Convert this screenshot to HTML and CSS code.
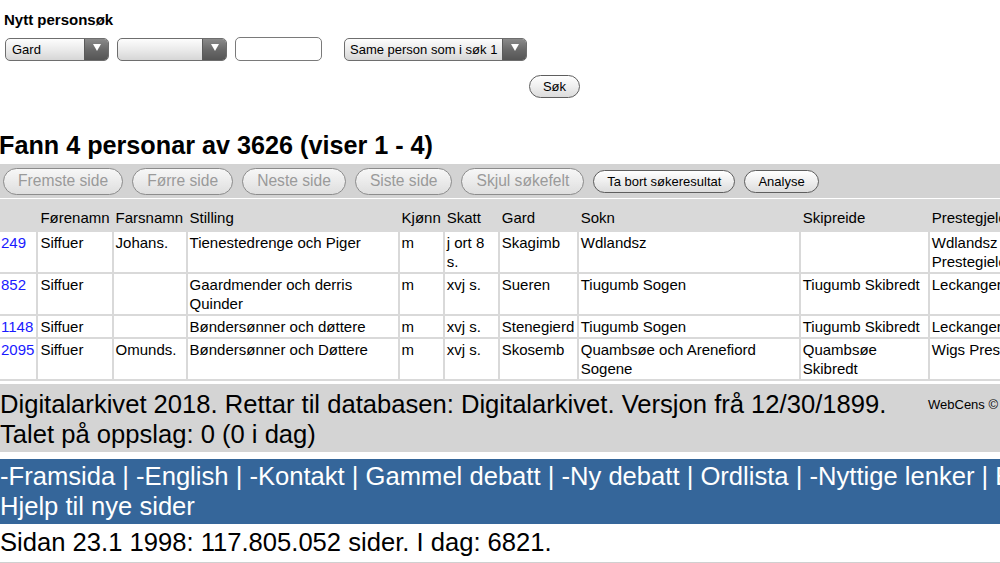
FILE: index.html
```html
<!DOCTYPE html>
<html lang="no">
<head>
<meta charset="utf-8">
<title>Personsøk</title>
<link rel="stylesheet" href="styles.css">
</head>
<body>
<div class="page">
  <section class="search">
    <h3 class="search-title">Nytt personsøk</h3>
    <div class="form-row">
      <span class="select sel-field"><select><option>Gard</option></select><span class="select-arrow"></span></span>
      <span class="select sel-op"><select><option></option></select><span class="select-arrow"></span></span>
      <input class="text-input" type="text">
      <span class="select sel-same"><select><option>Same person som i søk 1</option></select><span class="select-arrow"></span></span>
    </div>
    <div class="submit-row">
      <button class="btn btn-small" type="button">Søk</button>
    </div>
  </section>

  <h2 class="result-title">Fann 4 personar av 3626 (viser 1 - 4)</h2>

  <div class="button-bar">
    <button class="btn btn-big" type="button" disabled>Fremste side</button>
    <button class="btn btn-big" type="button" disabled>Førre side</button>
    <button class="btn btn-big" type="button" disabled>Neste side</button>
    <button class="btn btn-big" type="button" disabled>Siste side</button>
    <button class="btn btn-big" type="button" disabled>Skjul søkefelt</button>
    <button class="btn btn-small" type="button">Ta bort søkeresultat</button>
    <button class="btn btn-small" type="button">Analyse</button>
  </div>

  <table class="results">
    <thead>
      <tr>
        <th class="c-id"></th>
        <th class="c-fn">Førenamn</th>
        <th class="c-far">Farsnamn</th>
        <th class="c-st">Stilling</th>
        <th class="c-kj">Kjønn</th>
        <th class="c-sk">Skatt</th>
        <th class="c-ga">Gard</th>
        <th class="c-so">Sokn</th>
        <th class="c-skp">Skipreide</th>
        <th class="c-pr">Prestegjeld</th>
      </tr>
    </thead>
    <tbody>
      <tr>
        <td><a href="#">249</a></td>
        <td>Siffuer</td>
        <td>Johans.</td>
        <td>Tienestedrenge och Piger</td>
        <td>m</td>
        <td>j ort 8 s.</td>
        <td>Skagimb</td>
        <td>Wdlandsz</td>
        <td></td>
        <td>Wdlandsz Prestegield</td>
      </tr>
      <tr>
        <td><a href="#">852</a></td>
        <td>Siffuer</td>
        <td></td>
        <td>Gaardmender och derris Quinder</td>
        <td>m</td>
        <td>xvj s.</td>
        <td>Sueren</td>
        <td>Tiugumb Sogen</td>
        <td>Tiugumb Skibredt</td>
        <td>Leckanger</td>
      </tr>
      <tr>
        <td><a href="#">1148</a></td>
        <td>Siffuer</td>
        <td></td>
        <td>Bøndersønner och døttere</td>
        <td>m</td>
        <td>xvj s.</td>
        <td>Stenegierd</td>
        <td>Tiugumb Sogen</td>
        <td>Tiugumb Skibredt</td>
        <td>Leckanger</td>
      </tr>
      <tr>
        <td><a href="#">2095</a></td>
        <td>Siffuer</td>
        <td>Omunds.</td>
        <td>Bøndersønner och Døttere</td>
        <td>m</td>
        <td>xvj s.</td>
        <td>Skosemb</td>
        <td>Quambsøe och Arenefiord Sogene</td>
        <td>Quambsøe Skibredt</td>
        <td>Wigs Prestegield</td>
      </tr>
    </tbody>
  </table>

  <div class="footer-info">
    <div class="footer-text">Digitalarkivet 2018. Rettar til databasen: Digitalarkivet. Versjon frå 12/30/1899. Talet på oppslag: 0 (0 i dag)</div>
    <div class="footer-credit">WebCens © 2018</div>
  </div>

  <nav class="nav-bar">
    <a href="#">-Framsida</a> | <a href="#">-English</a> | <a href="#">-Kontakt</a> | <a href="#">Gammel debatt</a> | <a href="#">-Ny debatt</a> | <a href="#">Ordlista</a> | <a href="#">-Nyttige lenker</a> | <a href="#">Bidrag</a> | <a href="#">Hjelp til nye sider</a>
  </nav>

  <p class="counter">Sidan 23.1 1998: 117.805.052 sider. I dag: 6821.</p>
  <div class="bottom-rule"></div>
</div>
</body>
</html>
```

FILE: styles.css
```css
html, body {
  margin: 0;
  padding: 0;
  overflow: hidden;
  background: #ffffff;
}

body {
  font-family: "Liberation Sans", Arial, Helvetica, sans-serif;
  color: #000;
}

.page {
  width: 1100px;
}

/* ---------- search form ---------- */
.search {
  padding: 11px 0 0 5px;
}

.search-title {
  margin: 0 0 0 -1px;
  font-size: 15px;
  line-height: 17px;
  font-weight: bold;
}

.form-row {
  display: flex;
  align-items: center;
  margin-top: 9px;
  height: 24px;
}

.select {
  display: inline-flex;
  height: 23px;
  box-sizing: border-box;
  border: 1px solid #6e6e6e;
  border-radius: 5px;
  overflow: hidden;
  background: linear-gradient(#fdfdfd, #e9e9e9 55%, #d6d6d6);
}

.select select {
  appearance: none;
  -webkit-appearance: none;
  border: 0;
  background: transparent;
  font-family: "Liberation Sans", Arial, sans-serif;
  font-size: 13px;
  color: #000;
  padding: 0 0 0 6px;
  margin: 0;
  flex: 1;
  min-width: 0;
  height: 21px;
  outline: none;
}

.select-arrow {
  width: 23px;
  flex: none;
  border-left: 1px solid #5a5a5a;
  background: linear-gradient(#8a8a8a, #6a6a6a 50%, #555);
  display: flex;
  align-items: center;
  justify-content: center;
}

.select-arrow::before {
  content: "";
  width: 0;
  height: 0;
  border-left: 4px solid transparent;
  border-right: 4px solid transparent;
  border-top: 7px solid #ffffff;
  margin-top: -3px;
}

.sel-field { width: 104px; }
.sel-op { width: 110px; margin-left: 8px; }
.sel-same { width: 183px; margin-left: 22px; }
.sel-same select { padding-left: 5px; }

.text-input {
  width: 87px;
  height: 24px;
  box-sizing: border-box;
  margin: 0 0 0 8px;
  border: 1px solid #7a7a7a;
  border-radius: 5px;
  padding: 0 4px;
  background: #fff;
  font-size: 13px;
}

.submit-row {
  display: flex;
  justify-content: flex-end;
  width: 575px;
  margin-top: 14px;
}

/* ---------- buttons ---------- */
.btn {
  font-family: "Liberation Sans", Arial, sans-serif;
  border-radius: 14px;
  background: linear-gradient(#ffffff, #f0f0f0 45%, #dcdcdc);
  cursor: pointer;
  margin: 0;
  white-space: nowrap;
}

.btn-small {
  height: 23px;
  font-size: 13px;
  color: #000;
  border: 1px solid #5e5e5e;
  padding: 0 13px;
}

.btn-big {
  height: 27px;
  font-size: 15.6px;
  color: #9a9a9a;
  border: 1px solid #8c8c8c;
  padding: 0 14px;
  background: linear-gradient(#f7f7f7, #ececec 45%, #dedede);
}

/* ---------- result title ---------- */
.result-title {
  margin: 33px 0 0 -1px;
  font-size: 25.2px;
  line-height: 28px;
  font-weight: bold;
}

.button-bar {
  display: flex;
  align-items: center;
  gap: 9px;
  height: 34px;
  box-sizing: border-box;
  margin-top: 5px;
  padding: 0 3px;
  background: #d3d3d3;
}

/* ---------- table ---------- */
.results {
  table-layout: fixed;
  border-collapse: separate;
  border-spacing: 2px;
  background: #d9d9d9;
  margin: 1px 0 0 -3px;
  font-size: 15px;
  line-height: 19px;
}

.results th,
.results td {
  box-sizing: border-box;
  text-align: left;
  vertical-align: top;
  padding: 1px 2px;
}

.results th {
  font-weight: normal;
  vertical-align: bottom;
  padding: 7px 2px 3px;
  background: #d9d9d9;
}

.results td {
  background: #ffffff;
}

.results a {
  color: #1a1aff;
  text-decoration: none;
}

.c-id { width: 36px; }
.c-fn { width: 73px; }
.c-far { width: 72px; }
.c-st { width: 210px; }
.c-kj { width: 43px; }
.c-sk { width: 53px; }
.c-ga { width: 77px; }
.c-so { width: 220px; }
.c-skp { width: 127px; }
.c-pr { width: 125px; }

/* ---------- footer ---------- */
.footer-info {
  display: flex;
  margin-top: 3px;
  background: #d4d4d4;
  padding: 5px 0 3px 0;
}

.footer-text {
  width: 925px;
  font-size: 25.6px;
  line-height: 30px;
}

.footer-credit {
  padding-top: 8px;
  padding-left: 3px;
  font-size: 13px;
  line-height: 16px;
  white-space: nowrap;
}

.nav-bar {
  margin-top: 7px;
  background: #35669a;
  color: #ffffff;
  font-size: 25.6px;
  line-height: 30px;
  padding: 2px 0 3px;
}

.nav-bar a {
  color: #ffffff;
  text-decoration: none;
}

.counter {
  margin: 3px 0 0 0;
  font-size: 25.6px;
  line-height: 30px;
}

.bottom-rule {
  margin-top: 5px;
  height: 2px;
  background: #d0d0d0;
}
```
